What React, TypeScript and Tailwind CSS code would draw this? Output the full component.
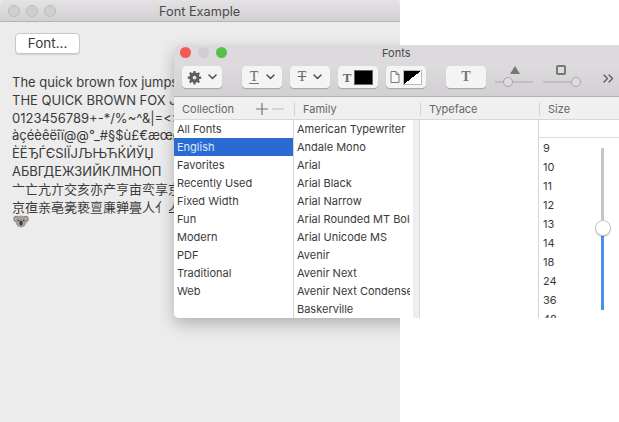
import React from 'react'

const collections = ['All Fonts', 'English', 'Favorites', 'Recently Used', 'Fixed Width', 'Fun', 'Modern', 'PDF', 'Traditional', 'Web']
const families = ['American Typewriter', 'Andale Mono', 'Arial', 'Arial Black', 'Arial Narrow', 'Arial Rounded MT Bold', 'Arial Unicode MS', 'Avenir', 'Avenir Next', 'Avenir Next Condensed', 'Baskerville']
const sizes = ['9', '10', '11', '12', '13', '14', '18', '24', '36', '48']

const sampleLines = [
  'The quick brown fox jumps over the lazy dog',
  'THE QUICK BROWN FOX JUMPS OVER THE LAZY DOG',
  '0123456789+-*/%~^&|=<>',
  'àçéèêëîï@@°_#§$ù£€æœø',
  'ÈЁЂЃЄЅІЇЈЉЊЋЌЍЎЏ',
  'АБВГДЕЖЗИЙКЛМНОП',
  '亠亡亢亣交亥亦产亨亩亪享京亭亮',
  '京亱亲亳亴亵亶亷亸亹人亻亼亽',
]

// ── Icons ──────────────────────────────────────────────────────────────────────

function Chevron() {
  return (
    <svg width="9" height="6" viewBox="0 0 9 6" fill="none" stroke="#555" strokeWidth="1.6" strokeLinecap="round" strokeLinejoin="round">
      <path d="M1 1l3.5 3.5L8 1" />
    </svg>
  )
}

function Gear() {
  return (
    <svg width="15" height="15" viewBox="0 0 16 16" fill="#5f5f5f">
      <path d="M7 1h2l.4 2 1.3.5 1.7-1.1 1.4 1.4-1.1 1.7.5 1.3 2 .4v2l-2 .4-.5 1.3 1.1 1.7-1.4 1.4-1.7-1.1-1.3.5-.4 2H7l-.4-2-1.3-.5-1.7 1.1-1.4-1.4 1.1-1.7-.5-1.3-2-.4V7l2-.4.5-1.3-1.1-1.7 1.4-1.4 1.7 1.1 1.3-.5z" />
      <circle cx="8" cy="8" r="2" fill="#e8e8e8" />
    </svg>
  )
}

function DocIcon() {
  return (
    <svg width="10" height="12" viewBox="0 0 10 12" fill="#fafafa" stroke="#777" strokeWidth="1">
      <path d="M1 .5h5l3 3v8H1zM6 .5v3h3" />
    </svg>
  )
}

function DoubleChevron() {
  return (
    <svg width="11" height="9" viewBox="0 0 11 9" fill="none" stroke="#555" strokeWidth="1.2" strokeLinecap="round" strokeLinejoin="round">
      <path d="M1 1l3.5 3.5L1 8M6 1l3.5 3.5L6 8" />
    </svg>
  )
}

function PlusIcon() {
  return (
    <svg width="12" height="12" viewBox="0 0 12 12" stroke="#777" strokeWidth="1.2">
      <path d="M6 0v12M0 6h12" />
    </svg>
  )
}

function MinusIcon() {
  return (
    <svg width="12" height="12" viewBox="0 0 12 12" stroke="#c4c4c4" strokeWidth="1.2">
      <path d="M0 6h12" />
    </svg>
  )
}

function Koala() {
  return (
    <svg width="16" height="14" viewBox="0 0 16 14">
      <circle cx="3.5" cy="5" r="3.2" fill="#8f8b87" />
      <circle cx="12.5" cy="5" r="3.2" fill="#8f8b87" />
      <circle cx="3.5" cy="5" r="1.6" fill="#c9c4bf" />
      <circle cx="12.5" cy="5" r="1.6" fill="#c9c4bf" />
      <ellipse cx="8" cy="7.5" rx="5.5" ry="6" fill="#a5a09b" />
      <ellipse cx="8" cy="9" rx="1.6" ry="2.6" fill="#3a3836" />
      <circle cx="5.2" cy="6.5" r=".8" fill="#333" />
      <circle cx="10.8" cy="6.5" r=".8" fill="#333" />
    </svg>
  )
}

function ToolButton({ className, children }: { className: string; children: React.ReactNode }) {
  return (
    <div className={`h-[22px] flex items-center justify-center rounded-[4px] bg-[#f4f4f4] shadow-[0_1px_1px_rgba(0,0,0,0.22)] ${className}`}>
      {children}
    </div>
  )
}

function TrafficLight({ color }: { color: string }) {
  return <span className={`w-[11px] h-[11px] rounded-full ${color}`} />
}

// ── Component ──────────────────────────────────────────────────────────────────

export default function App() {
  return (
    <div className="relative w-[619px] h-[422px] overflow-hidden bg-white font-['Inter','Noto_Sans_CJK_SC',sans-serif] text-[#3a3a3a]">
      {/* ── Main window ── */}
      <div className="absolute left-0 top-0 w-[400px] h-[422px] overflow-hidden bg-[#ececec]">
        <div className="relative h-[22px] flex items-center gap-[6px] pl-2 pt-[1px] rounded-t-[5px] bg-gradient-to-b from-[#e4e2e4] to-[#d2d0d2] border-b border-[#b5b3b5]">
          <span className="w-3 h-3 rounded-full bg-[#d0cfd0] border border-[#bdbcbd]" />
          <span className="w-3 h-3 rounded-full bg-[#d0cfd0] border border-[#bdbcbd]" />
          <span className="w-3 h-3 rounded-full bg-[#d0cfd0] border border-[#bdbcbd]" />
          <span className="absolute left-[159px] top-[4px] text-[12.75px] leading-[16px] text-[#4a4a4a]">Font Example</span>
        </div>
        <div className="pl-[15px] pt-[11px]">
          <div className="w-[65px] h-[21px] flex items-center justify-center rounded-[4px] bg-white border border-[#c8c8c8] shadow-[0_1px_1px_rgba(0,0,0,0.12)] text-[13.5px]">
            Font...
          </div>
        </div>
        <div className="pl-3 pt-[19px] text-[13px] leading-[18px] whitespace-nowrap">
          {sampleLines.map(line => (
            <div key={line} className="h-[17.8px]">{line}</div>
          ))}
          <div className="-mt-[1px] pl-[1px]"><Koala /></div>
        </div>
        {/* Panel shadow only falls on this window */}
        <div className="absolute left-[174px] top-[45px] w-[445px] h-[273px] rounded-[5px] shadow-[0_6px_16px_rgba(0,0,0,0.25)]" />
      </div>

      {/* ── Fonts panel ── */}
      <div className="absolute left-[174px] top-[45px] w-[445px] h-[273px] flex flex-col bg-white rounded-tl-[5px] rounded-bl-[5px]">
        {/* Title bar */}
        <div className="relative h-[21px] flex items-start gap-[7px] pl-[6px] pt-[2px] rounded-tl-[5px] bg-[#dcdadc]">
          <TrafficLight color="bg-[#f25a52]" />
          <TrafficLight color="bg-[#cfcdcf]" />
          <TrafficLight color="bg-[#56c04a]" />
          <span className="absolute left-[208px] top-0 text-[11px] leading-[16px] text-[#4a4a4a]">Fonts</span>
        </div>

        {/* Toolbar */}
        <div className="h-[31px] flex items-start pl-2 bg-gradient-to-b from-[#dcdadc] to-[#d2d0d2] border-b border-[#b2b0b2]">
          <ToolButton className="w-10 gap-[6px]"><Gear /><Chevron /></ToolButton>
          <ToolButton className="w-10 gap-[7px] ml-5">
            <span className="font-['Liberation_Serif',serif] text-[14px] leading-[12px] border-b-[1.5px] border-[#777] px-[1px] text-[#666]">T</span>
            <Chevron />
          </ToolButton>
          <ToolButton className="w-10 gap-[7px] ml-2">
            <span className="font-['Liberation_Serif',serif] text-[14px] leading-none line-through text-[#666]">T</span>
            <Chevron />
          </ToolButton>
          <ToolButton className="w-10 gap-[3px] ml-2">
            <span className="font-['Liberation_Serif',serif] font-bold text-[13px] leading-none text-[#666]">T</span>
            <span className="w-[19px] h-[15px] bg-black border border-[#666]" />
          </ToolButton>
          <ToolButton className="w-10 gap-[3px] ml-2">
            <DocIcon />
            <span className="w-[19px] h-[15px] border border-[#bbb] bg-[linear-gradient(to_bottom_right,#000_50%,#fff_50%)]" />
          </ToolButton>
          <ToolButton className="w-10 ml-5">
            <span className="font-['Liberation_Serif',serif] font-bold text-[14px] leading-none text-[#777]">T</span>
          </ToolButton>

          {/* Shadow sliders */}
          <div className="relative w-[38px] h-[22px] ml-[9px]">
            <span className="absolute left-[15px] top-0 w-0 h-0 border-x-[5px] border-x-transparent border-b-[8px] border-b-[#777]" />
            <span className="absolute left-0 right-0 top-[15px] h-[2px] bg-[#bfbdbf]" />
            <span className="absolute left-[8px] top-[11px] w-[10px] h-[10px] rounded-full bg-[#dedcde] border border-[#a8a6a8]" />
          </div>
          <div className="relative w-[38px] h-[22px] ml-[10px]">
            <span className="absolute left-[13px] top-[-1px] w-[10px] h-[10px] rounded-[2px] bg-[#ddd] border-2 border-[#777]" />
            <span className="absolute left-0 right-0 top-[15px] h-[2px] bg-[#bfbdbf]" />
            <span className="absolute left-[28px] top-[11px] w-[10px] h-[10px] rounded-full bg-[#dedcde] border border-[#a8a6a8]" />
          </div>
          <span className="ml-[22px] mt-[8px]"><DoubleChevron /></span>
        </div>

        {/* Column headers */}
        <div className="h-[23px] flex items-center pt-[2px] bg-[#f0f0f0] border-b border-[#d8d8d8] text-[11px] text-[#666]">
          <div className="w-[120px] flex items-center pl-2">
            <span>Collection</span>
            <span className="ml-[22px] flex"><PlusIcon /></span>
            <span className="ml-[4px] flex"><MinusIcon /></span>
          </div>
          <div className="w-[126px] h-[14px] flex items-center pl-2 border-l border-[#d4d4d4]">Family</div>
          <div className="w-[119px] h-[14px] flex items-center pl-2 border-l border-[#d4d4d4]">Typeface</div>
          <div className="flex-1 h-[14px] flex items-center pl-2 border-l border-[#d4d4d4]">Size</div>
        </div>

        {/* Lists */}
        <div className="flex-1 min-h-0 flex text-[11px] leading-[18px]">
          <div className="w-[120px] border-r border-[#d4d4d4] rounded-bl-[5px]">
            {collections.map(name => (
              <div key={name} className={`h-[18px] pl-[3px] ${name === 'English' ? 'bg-[#2a6ad3] text-[#dfe9fa]' : ''}`}>{name}</div>
            ))}
          </div>
          <div className="w-[116px] mr-[3px] overflow-hidden whitespace-nowrap">
            {families.map(name => (
              <div key={name} className="h-[18px] pl-[3px]">{name}</div>
            ))}
          </div>
          <div className="w-[7px] bg-[#eeeeee] border-r border-[#dcdcdc]" />
          <div className="w-[119px] border-r border-[#d4d4d4]" />
          <div className="flex-1 min-w-0 flex flex-col">
            <div className="h-[18px] shrink-0 border-b border-[#dcdcdc]" />
            <div className="relative flex-1 min-h-0 pl-1 pt-[1px] overflow-hidden leading-[19px]">
              {sizes.map(size => (
                <div key={size} className="h-[19px]">{size}</div>
              ))}
              {/* Size slider */}
              <div className="absolute left-[62px] top-[10px] w-[3px] h-[76px] bg-[#c6c6c6]" />
              <div className="absolute left-[62px] top-[98px] w-[3px] h-[74px] bg-[#4a90ee]" />
              <div className="absolute left-[56px] top-[82px] w-[16px] h-[16px] rounded-full bg-white border border-[#c8c8c8] shadow-[0_1px_1px_rgba(0,0,0,0.2)]" />
            </div>
          </div>
        </div>
      </div>
    </div>
  )
}
